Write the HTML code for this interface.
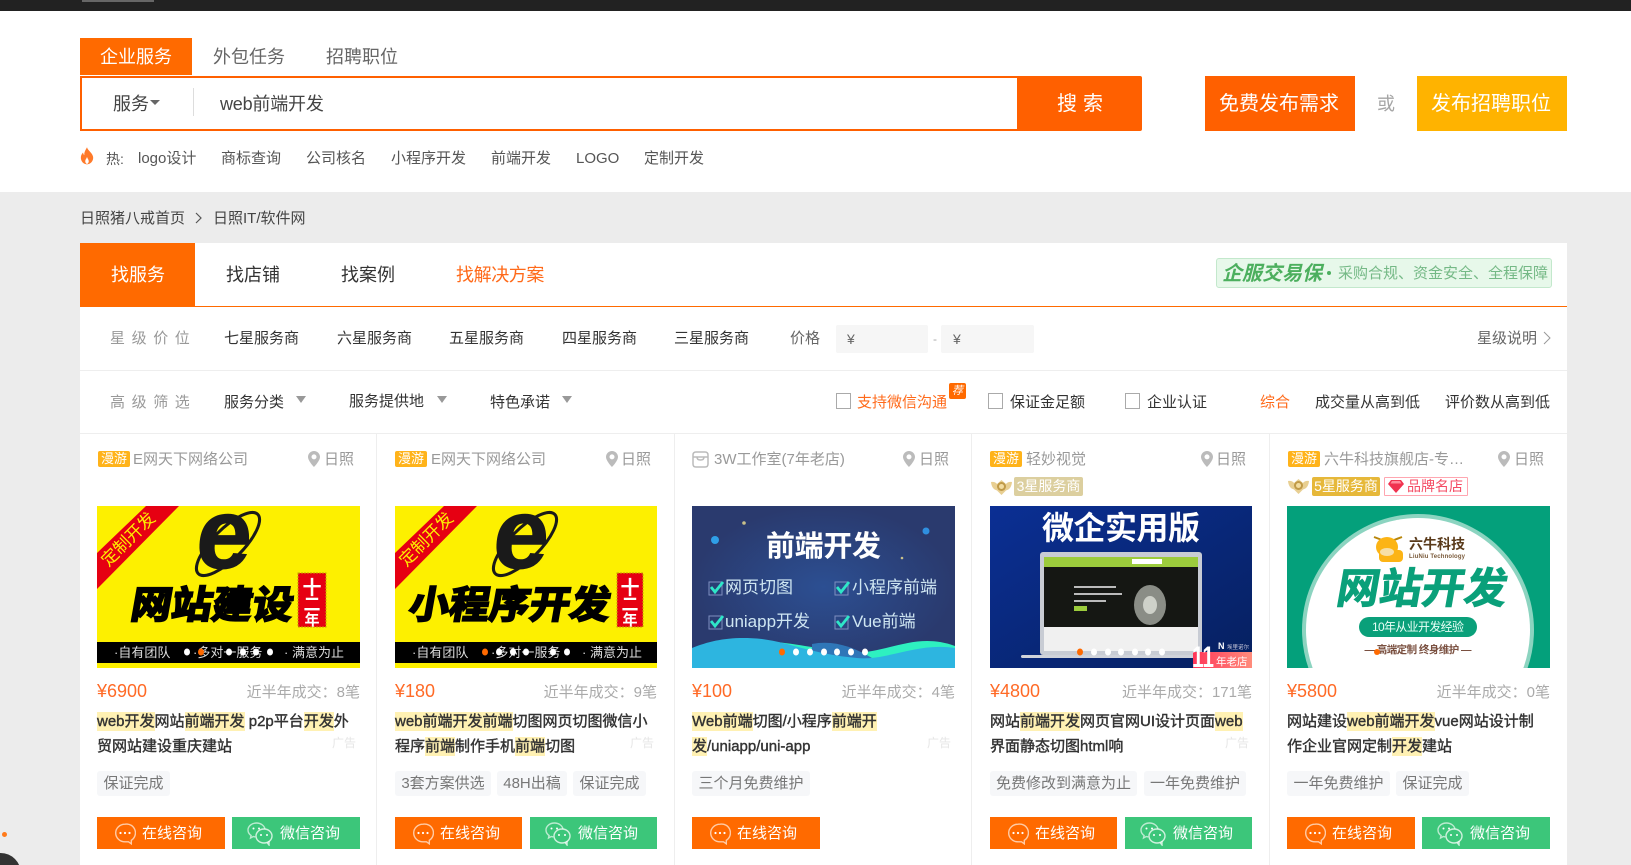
<!DOCTYPE html>
<html lang="zh"><head><meta charset="utf-8"><title>web前端开发</title>
<style>
html,body{margin:0;padding:0;width:1631px;height:865px;overflow:hidden;background:#ececec}
body{position:relative;font-family:"Liberation Sans","Noto Sans CJK SC",sans-serif;color:#333}
.r{position:absolute}
.t{position:absolute;white-space:nowrap;line-height:20px;height:20px;font-size:15px;margin-top:1px}
.g{color:#999}
.tag{position:absolute;width:32px;height:16px;top:451px;background:#ffb31a;border-radius:2px;color:#fff;font-size:13px;line-height:16px;text-align:center;white-space:nowrap}
.pin{position:absolute;top:451px;width:12px;height:16px}
.nm{top:449px;color:#999}
.pr{top:680px;font-size:18px;color:#ff6a26}
.sl{top:682px;color:#aaa;text-align:right}
.ti{position:absolute;top:709px;width:270px;font-size:15px;line-height:25px;color:#333;-webkit-text-stroke:.4px #333;white-space:nowrap}
.ti i{font-style:normal;background:#fff1b3;padding:1px 0}
.ad{position:absolute;top:736px;font-size:12px;line-height:14px;color:#e6e6e6;white-space:nowrap}
.st{position:absolute;top:771px;height:25px;line-height:26px;background:#f6f7f9;border-radius:3px;color:#777;font-size:15px;text-align:center;white-space:nowrap}
.bt{position:absolute;top:817px;height:32px;width:128px;line-height:33px;color:#fff;font-size:15px;white-space:nowrap}
.o{background:#ff6a00}.w{background:#3cc67a}
.bt span{position:absolute;left:45px;top:0}.w span{left:48px}
.bt svg{position:absolute;left:17px;top:6px}.w svg{left:15px;top:5px}
.cb{position:absolute;top:393px;width:13px;height:14px;border:1px solid #aaa;background:#fff}
.car{position:absolute;top:396px;width:0;height:0;border:5px solid transparent;border-top:7px solid #999;border-bottom:0}
.sep{position:absolute;top:434px;width:1px;height:431px;background:#eee}
.img{position:absolute;top:506px;height:162px;display:block;font-family:"Liberation Sans","Noto Sans CJK SC",sans-serif}
</style></head><body>
<svg width="0" height="0" style="position:absolute"><defs>
<symbol id="pin" viewBox="0 0 12 16"><path fill-rule="evenodd" fill="#bbb" d="M6 0C2.7 0 0 2.6 0 5.9 0 10 6 16 6 16s6-6 6-10.100C12 2.600 9.300 0 6 0zm0 3.400a2.500 2.500 0 1 1 0 5 2.500 2.500 0 0 1 0-5z"/></symbol>
<symbol id="chat" viewBox="0 0 22 22"><path fill="none" stroke="#fff" stroke-opacity=".65" stroke-width="1.400" d="M11 1.200a9.300 8.800 0 1 0 0 17.600h3.500l2.800 2v-3.500A8.800 8.800 0 0 0 11 1.200z"/><circle cx="6.500" cy="10" r="1.100" fill="#fff"/><circle cx="11" cy="10" r="1.100" fill="#fff"/><circle cx="15.500" cy="10" r="1.100" fill="#fff"/></symbol>
<symbol id="wx" viewBox="0 0 26 24"><path fill="none" stroke="#fff" stroke-opacity=".65" stroke-width="1.400" d="M9.500 1C4.800 1 1 4.100 1 8c0 2.200 1.200 4.200 3.100 5.500L3.500 16l2.800-1.500c.6.200 1.300.3 2 .4"/><path fill="none" stroke="#fff" stroke-opacity=".65" stroke-width="1.400" d="M9.500 1c4.200 0 7.700 2.500 8.400 5.800"/><ellipse cx="17" cy="14" rx="8" ry="7" fill="none" stroke="#fff" stroke-opacity=".75" stroke-width="1.400"/><path fill="none" stroke="#fff" stroke-opacity=".75" stroke-width="1.400" d="M20 20.500l2 2.500v-4"/><circle cx="6.500" cy="6.500" r="1" fill="#fff"/><circle cx="12" cy="6.500" r="1" fill="#fff"/><circle cx="14" cy="13" r="1" fill="#fff"/><circle cx="20" cy="13" r="1" fill="#fff"/></symbol>
<symbol id="medal" viewBox="0 0 21 17"><path fill="#e8cf92" d="M0 4c3-.5 5 .5 6 2l4.500-4L15 6c1-1.500 3-2.500 6-2-.5 5-2.500 7.500-6 8.500l-4.500 4.500L6 12.500C2.500 11.500.5 9 0 4z"/><circle cx="10.500" cy="8.500" r="4.500" fill="#c09a48"/><circle cx="10.500" cy="8.500" r="2.500" fill="#f2dca0"/></symbol>
</defs></svg>

<!-- top bar -->
<div class="r" style="left:0;top:0;width:1631px;height:11px;background:#222"></div>
<div class="r" style="left:82px;top:0;width:72px;height:2px;background:#666"></div>
<!-- white header -->
<div class="r" style="left:0;top:11px;width:1631px;height:181px;background:#fff"></div>
<div class="r" style="left:80px;top:38px;width:112px;height:37px;background:#ff6a00"></div>
<div class="t" style="left:100px;top:46px;font-size:18px;color:#fff">企业服务</div>
<div class="t" style="left:213px;top:46px;font-size:18px;color:#666">外包任务</div>
<div class="t" style="left:326px;top:46px;font-size:18px;color:#666">招聘职位</div>
<div class="r" style="left:80px;top:76px;width:938px;height:51px;border:2px solid #ff6000;background:#fff"></div>
<div class="t" style="left:113px;top:93px;font-size:18px;color:#444">服务</div>
<div class="r" style="left:150px;top:100px;width:0;height:0;border:5px solid transparent;border-top:5px solid #666;border-bottom:0"></div>
<div class="r" style="left:193px;top:88px;width:1px;height:28px;background:#ddd"></div>
<div class="t" style="left:220px;top:93px;font-size:18px;color:#444;letter-spacing:-.2px">web前端开发</div>
<div class="r" style="left:1017px;top:76px;width:125px;height:55px;background:#ff6000;border-radius:2px"></div>
<div class="t" style="left:1057px;top:93px;font-size:20px;color:#fff;letter-spacing:6px">搜索</div>
<div class="r" style="left:1205px;top:76px;width:150px;height:55px;background:#ff6000"></div>
<div class="t" style="left:1219px;top:93px;font-size:20px;color:#fff">免费发布需求</div>
<div class="t" style="left:1377px;top:93px;font-size:18px;color:#a5a5a5">或</div>
<div class="r" style="left:1417px;top:76px;width:150px;height:55px;background:#ffb300"></div>
<div class="t" style="left:1431px;top:93px;font-size:20px;color:#fff">发布招聘职位</div>
<svg class="r" style="left:80px;top:146px" width="14" height="20" viewBox="0 0 16 20"><path fill="#ff7a2a" d="M8 0c1 4 6 6 7 11 .6 4.500-3 8.500-7 8.500S.6 16 1 11c.3-2.500 1.600-4 2.500-5 .2 1.500.6 2.500 1.500 3C4.500 5.500 6.500 3 8 0z"/><path fill="#fff" d="M8 11c.5 2 2 3 2 5 0 1.500-1 3-2 3s-2-1.500-2-3c0-2 1.500-3 2-5z"/></svg>
<div class="t" style="left:106px;top:148px;font-size:14px;color:#555">热:</div>
<div class="t" style="left:138px;top:148px;color:#555">logo设计</div>
<div class="t" style="left:221px;top:148px;color:#555">商标查询</div>
<div class="t" style="left:306px;top:148px;color:#555">公司核名</div>
<div class="t" style="left:391px;top:148px;color:#555">小程序开发</div>
<div class="t" style="left:491px;top:148px;color:#555">前端开发</div>
<div class="t" style="left:576px;top:148px;color:#555">LOGO</div>
<div class="t" style="left:644px;top:148px;color:#555">定制开发</div>
<!-- breadcrumb -->
<div class="t" style="left:80px;top:208px;color:#444">日照猪八戒首页</div>
<svg class="r" style="left:194px;top:212px" width="8" height="12"><path d="M2 1l5 5-5 5" fill="none" stroke="#555" stroke-width="1.200"/></svg>
<div class="t" style="left:213px;top:208px;color:#444">日照IT/软件网</div>
<!-- panel -->
<div class="r" style="left:80px;top:243px;width:1487px;height:622px;background:#fff"></div>
<div class="r" style="left:80px;top:243px;width:115px;height:63px;background:#ff6a00"></div>
<div class="r" style="left:80px;top:306px;width:1487px;height:1px;background:#ff6a00"></div>
<div class="t" style="left:111px;top:264px;font-size:18px;color:#fff">找服务</div>
<div class="t" style="left:226px;top:264px;font-size:18px;color:#333">找店铺</div>
<div class="t" style="left:341px;top:264px;font-size:18px;color:#333">找案例</div>
<div class="t" style="left:456px;top:264px;font-size:18px;color:#ff6a1a;letter-spacing:-.4px">找解决方案</div>
<div class="r" style="left:1216px;top:258px;width:334px;height:28px;background:#e7f8ea;border:1px solid #c3e8cc;border-radius:3px"></div>
<div class="t" style="left:1222px;top:263px;font-size:20px;font-weight:bold;font-style:italic;color:#4caf5e">企服交易保</div>
<div class="r" style="left:1327px;top:271px;width:4px;height:4px;border-radius:50%;background:#4caf5e"></div>
<div class="t" style="left:1338px;top:263px;font-size:15px;color:#75b986">采购合规、资金安全、全程保障</div>
<!-- row 1 -->
<div class="t g" style="left:110px;top:328px;letter-spacing:6.600px">星级价位</div>
<div class="t" style="left:224px;top:328px">七星服务商</div>
<div class="t" style="left:337px;top:328px">六星服务商</div>
<div class="t" style="left:449px;top:328px">五星服务商</div>
<div class="t" style="left:562px;top:328px">四星服务商</div>
<div class="t" style="left:674px;top:328px">三星服务商</div>
<div class="t" style="left:790px;top:328px;color:#666">价格</div>
<div class="r" style="left:836px;top:325px;width:92px;height:28px;background:#f6f6f6;border-radius:2px"></div>
<div class="t" style="left:847px;top:328px;font-size:14px;color:#666">¥</div>
<div class="t" style="left:933px;top:328px;font-size:12px;color:#aaa">-</div>
<div class="r" style="left:941px;top:325px;width:93px;height:28px;background:#f6f6f6;border-radius:2px"></div>
<div class="t" style="left:953px;top:328px;font-size:14px;color:#666">¥</div>
<div class="t" style="left:1477px;top:328px;color:#666">星级说明</div>
<svg class="r" style="left:1542px;top:331px" width="10" height="14"><path d="M2 1l6 6-6 6" fill="none" stroke="#999" stroke-width="1"/></svg>
<div class="r" style="left:80px;top:370px;width:1487px;height:1px;background:#eee"></div>
<!-- row 2 -->
<div class="t g" style="left:110px;top:392px;letter-spacing:6.600px">高级筛选</div>
<div class="t" style="left:224px;top:392px">服务分类</div><div class="car" style="left:296px"></div>
<div class="t" style="left:349px;top:391px">服务提供地</div><div class="car" style="left:437px"></div>
<div class="t" style="left:490px;top:392px">特色承诺</div><div class="car" style="left:562px"></div>
<div class="cb" style="left:836px"></div>
<div class="t" style="left:857px;top:392px;color:#ff6a1a">支持微信沟通</div>
<div class="r" style="left:949px;top:383px;width:17px;height:16px;background:#ff6a00;border-radius:2px;color:#fff;font-size:11px;line-height:16px;text-align:center;font-style:italic">荐</div>
<div class="cb" style="left:988px"></div>
<div class="t" style="left:1010px;top:392px">保证金足额</div>
<div class="cb" style="left:1125px"></div>
<div class="t" style="left:1147px;top:392px">企业认证</div>
<div class="t" style="left:1260px;top:392px;color:#ff6a1a">综合</div>
<div class="t" style="left:1315px;top:392px">成交量从高到低</div>
<div class="t" style="left:1445px;top:392px">评价数从高到低</div>
<div class="r" style="left:80px;top:433px;width:1487px;height:1px;background:#eee"></div>
<div class="sep" style="left:376px"></div><div class="sep" style="left:674px"></div><div class="sep" style="left:971px"></div><div class="sep" style="left:1269px"></div>

<!-- card heads -->
<div class="tag" style="left:98px">漫游</div><div class="t nm" style="left:133px">E网天下网络公司</div>
<svg class="pin" style="left:308px"><use href="#pin"/></svg><div class="t nm" style="left:324px">日照</div>
<div class="tag" style="left:395px">漫游</div><div class="t nm" style="left:431px">E网天下网络公司</div>
<svg class="pin" style="left:606px"><use href="#pin"/></svg><div class="t nm" style="left:621px">日照</div>
<svg class="r" style="left:692px;top:451px" width="17" height="17" viewBox="0 0 17 17"><path fill="none" stroke="#bbb" stroke-width="1.500" d="M1 6V4q0-3 3-3h9q3 0 3 3v2M1 6h15M1 6v7q0 3 3 3h9q3 0 3-3V6M5 6q0 3 3.500 3T12 6"/></svg>
<div class="t nm" style="left:714px">3W工作室(7年老店)</div>
<svg class="pin" style="left:903px"><use href="#pin"/></svg><div class="t nm" style="left:919px">日照</div>
<div class="tag" style="left:990px">漫游</div><div class="t nm" style="left:1026px">轻妙视觉</div>
<svg class="pin" style="left:1201px"><use href="#pin"/></svg><div class="t nm" style="left:1216px">日照</div>
<div class="tag" style="left:1288px">漫游</div><div class="t nm" style="left:1324px;width:140px;overflow:hidden">六牛科技旗舰店-专…</div>
<svg class="pin" style="left:1498px"><use href="#pin"/></svg><div class="t nm" style="left:1514px">日照</div>
<svg class="r" style="left:991px;top:478px" width="21" height="17"><use href="#medal"/></svg>
<div class="r" style="left:1014px;top:477px;width:69px;height:19px;line-height:19px;background:#dccf9f;border-radius:2px;color:#fff;font-size:14px;text-align:center;white-space:nowrap">3星服务商</div>
<svg class="r" style="left:1288px;top:477px" width="21" height="17"><use href="#medal"/></svg>
<div class="r" style="left:1312px;top:477px;width:68px;height:19px;line-height:19px;background:#e6b83a;border-radius:2px;color:#fff;font-size:14px;text-align:center;white-space:nowrap">5星服务商</div>
<div class="r" style="left:1384px;top:477px;width:82px;height:17px;border:1px solid #ffa6b0;border-radius:1px"></div>
<svg class="r" style="left:1388px;top:479px" width="16" height="14"><path fill="#f0324f" d="M3 1h10l3 4-8 9-8-9z"/><path fill="#ff8a9a" d="M4 2h8l1.500 2.500h-11z"/></svg>
<div class="t" style="left:1407px;top:475px;font-size:14px;color:#f44b63">品牌名店</div>

<!-- image 1 -->
<svg class="img" style="left:97px" width="263" height="162" viewBox="0 0 263 162">
<rect width="263" height="162" fill="#fdf000"/>
<polygon points="49,0 82,0 0,83 0,47" fill="#e60012"/>
<text transform="translate(31,33) rotate(-45)" text-anchor="middle" font-size="17" fill="#fdf000" y="6">定制开发</text>
<ellipse cx="131" cy="38" rx="42" ry="15" transform="rotate(-45 131 38)" fill="none" stroke="#1a1a1a" stroke-width="3"/>
<text x="97" y="62" font-size="100" font-weight="bold" fill="#1a1a1a" stroke="#1a1a1a" stroke-width="1" font-family="Liberation Sans" transform="skewX(-6) translate(6,0)">e</text>
<text x="33" y="112" font-size="38" font-weight="bold" textLength="162" lengthAdjust="spacingAndGlyphs" fill="#000" stroke="#000" stroke-width="2" transform="skewX(-10) translate(19,0)">网站建设</text>
<rect x="201" y="67" width="28" height="54" fill="#e60012" stroke="#c9a500" stroke-width="1" stroke-dasharray="2 1"/>
<text x="215" y="88" font-size="19" font-weight="bold" fill="#fff" text-anchor="middle">十</text>
<text x="215" y="104" font-size="17" font-weight="bold" fill="#fff" text-anchor="middle">二</text>
<text x="215" y="119" font-size="15" font-weight="bold" fill="#fff" text-anchor="middle">年</text>
<rect y="136" width="263" height="21" fill="#000"/>
<g font-size="13" fill="#ddd"><text x="17" y="151">·自有团队</text><text x="96" y="151">·多对一服务</text><text x="187" y="151">· 满意为止</text></g>
<g fill="#fff"><ellipse cx="90" cy="146" rx="3" ry="3.500"/><ellipse cx="132" cy="146" rx="3" ry="3.500"/><ellipse cx="146" cy="146" rx="3" ry="3.500"/><ellipse cx="159" cy="146" rx="3" ry="3.500"/><ellipse cx="173" cy="146" rx="3" ry="3.500"/></g>
<ellipse cx="104" cy="146" rx="3" ry="3.500" fill="#ff6a00"/>
</svg>
<!-- image 2 -->
<svg class="img" style="left:395px" width="262" height="162" viewBox="0 0 262 162">
<rect width="262" height="162" fill="#fdf000"/>
<polygon points="49,0 82,0 0,83 0,47" fill="#e60012"/>
<text transform="translate(31,33) rotate(-45)" text-anchor="middle" font-size="17" fill="#fdf000" y="6">定制开发</text>
<ellipse cx="130" cy="38" rx="42" ry="15" transform="rotate(-45 130 38)" fill="none" stroke="#1a1a1a" stroke-width="3"/>
<text x="96" y="62" font-size="100" font-weight="bold" fill="#1a1a1a" stroke="#1a1a1a" stroke-width="1" font-family="Liberation Sans" transform="skewX(-6) translate(6,0)">e</text>
<text x="13" y="112" font-size="38" font-weight="bold" textLength="201" lengthAdjust="spacingAndGlyphs" fill="#000" stroke="#000" stroke-width="2" transform="skewX(-10) translate(19,0)">小程序开发</text>
<rect x="222" y="67" width="26" height="54" fill="#e60012" stroke="#c9a500" stroke-width="1" stroke-dasharray="2 1"/>
<text x="235" y="88" font-size="19" font-weight="bold" fill="#fff" text-anchor="middle">十</text>
<text x="235" y="104" font-size="17" font-weight="bold" fill="#fff" text-anchor="middle">二</text>
<text x="235" y="119" font-size="15" font-weight="bold" fill="#fff" text-anchor="middle">年</text>
<rect y="136" width="262" height="21" fill="#000"/>
<g font-size="13" fill="#ddd"><text x="17" y="151">·自有团队</text><text x="96" y="151">·多对一服务</text><text x="187" y="151">· 满意为止</text></g>
<g fill="#fff"><ellipse cx="104" cy="146" rx="3" ry="3.500"/><ellipse cx="118" cy="146" rx="3" ry="3.500"/><ellipse cx="131" cy="146" rx="3" ry="3.500"/><ellipse cx="158" cy="146" rx="3" ry="3.500"/><ellipse cx="172" cy="146" rx="3" ry="3.500"/></g>
<ellipse cx="90" cy="146" rx="3" ry="3.500" fill="#ff6a00"/>
</svg>
<!-- image 3 -->
<svg class="img" style="left:692px" width="263" height="162" viewBox="0 0 263 162">
<defs><radialGradient id="g3" cx=".5" cy=".5" r=".5"><stop offset="0" stop-color="#2c4f92"/><stop offset="1" stop-color="#2a3a6e"/></radialGradient></defs>
<rect width="263" height="162" fill="#2a3a6e"/><rect width="263" height="162" fill="url(#g3)"/>
<circle cx="23" cy="34" r="4" fill="#2f9fe8"/><circle cx="52" cy="17" r="1.800" fill="#c8c08a"/><circle cx="210" cy="52" r="1.300" fill="#c8c08a"/><circle cx="234" cy="25" r="3.500" fill="#2f8fe0"/>
<text x="74" y="50" font-size="29" font-weight="bold" fill="#fff" textLength="115">前端开发</text>
<g font-size="17" fill="#cfe6f2"><text x="33" y="87">网页切图</text><text x="160" y="87">小程序前端</text><text x="33" y="121">uniapp开发</text><text x="160" y="121">Vue前端</text></g>
<g fill="none" stroke="#7f8fc0"><rect x="17" y="76" width="13" height="13"/><rect x="143" y="76" width="13" height="13"/><rect x="17" y="110" width="13" height="13"/><rect x="143" y="110" width="13" height="13"/></g>
<g fill="none" stroke="#2fe6c8" stroke-width="2.800"><path d="M19 81l4 5 8-10"/><path d="M145 81l4 5 8-10"/><path d="M19 115l4 5 8-10"/><path d="M145 115l4 5 8-10"/></g>
<path fill="#2ef0c0" d="M40 138c30-8 70 2 110 8s70-22 113-6v22H40z"/>
<path fill="#2f76b8" d="M120 138c20-4 40 2 60 14v4h-60z"/>
<path fill="#2db5e0" d="M0 142c20-8 40-12 70-9 30 4 50 15 95 19 30 3 60-16 98-10v20H0z"/>
<g fill="#fff"><ellipse cx="104" cy="146" rx="3" ry="3.500"/><ellipse cx="118" cy="146" rx="3" ry="3.500"/><ellipse cx="132" cy="146" rx="3" ry="3.500"/><ellipse cx="145" cy="146" rx="3" ry="3.500"/><ellipse cx="159" cy="146" rx="3" ry="3.500"/><ellipse cx="173" cy="146" rx="3" ry="3.500"/></g>
<ellipse cx="90" cy="146" rx="3" ry="3.500" fill="#ff6a00"/>
</svg>
<!-- image 4 -->
<svg class="img" style="left:990px" width="262" height="162" viewBox="0 0 262 162">
<defs><linearGradient id="g4" x1="0" y1="0" x2="1" y2="1"><stop offset="0" stop-color="#0b2f94"/><stop offset="1" stop-color="#06205f"/></linearGradient></defs>
<rect width="262" height="162" fill="url(#g4)"/>
<text x="52" y="33" font-size="32" font-weight="bold" fill="#fff" textLength="158">微企实用版</text>
<rect x="50" y="46" width="162" height="103" rx="3" fill="#c8ccd4"/>
<rect x="54" y="51" width="154" height="10" fill="#9ccc3c"/>
<rect x="54" y="61" width="154" height="60" fill="#151713"/>
<rect x="54" y="121" width="154" height="24" fill="#f0f0f0"/>
<rect x="142" y="53" width="30" height="5" fill="#fff"/>
<ellipse cx="160" cy="99" rx="16" ry="20" fill="#8a8d86"/><ellipse cx="160" cy="99" rx="7" ry="9" fill="#ced1c9"/>
<g fill="#bbb"><rect x="84" y="80" width="42" height="2"/><rect x="84" y="87" width="48" height="2"/><rect x="84" y="94" width="32" height="2"/></g><rect x="84" y="100" width="13" height="5" fill="#9ccc3c"/>
<rect x="31" y="149" width="197" height="3" rx="1.500" fill="#d0d3da"/>
<defs><linearGradient id="g4b"><stop offset="0" stop-color="#ff3557"/><stop offset="1" stop-color="#ff8c7c"/></linearGradient></defs>
<rect x="203" y="146" width="59" height="16" fill="url(#g4b)"/>
<text x="202" y="161" font-size="30" font-weight="bold" fill="#fff" textLength="22" lengthAdjust="spacingAndGlyphs">11</text>
<text x="226" y="159" font-size="10.500" fill="#fff">年老店</text>
<text x="228" y="143" font-size="9" font-weight="bold" fill="#fff">N</text><text x="237" y="143" font-size="5.500" fill="#ccd">埃里诺尔</text>
<g fill="#fff"><ellipse cx="104" cy="146" rx="3" ry="3.500"/><ellipse cx="118" cy="146" rx="3" ry="3.500"/><ellipse cx="131" cy="146" rx="3" ry="3.500"/><ellipse cx="145" cy="146" rx="3" ry="3.500"/><ellipse cx="158" cy="146" rx="3" ry="3.500"/><ellipse cx="172" cy="146" rx="3" ry="3.500"/></g>
<ellipse cx="90" cy="146" rx="3" ry="3.500" fill="#ff6a00"/>
</svg>
<!-- image 5 -->
<svg class="img" style="left:1287px" width="263" height="162" viewBox="0 0 263 162">
<rect width="263" height="162" fill="#04a07b"/>
<circle cx="131" cy="124" r="116" fill="#8cd4c0"/><circle cx="131" cy="124" r="112" fill="#fff"/>
<path d="M87 31l8 3M115 31l-8 3" stroke="#b8860b" stroke-width="2"/>
<ellipse cx="100" cy="41" rx="11" ry="10" fill="#fcb415"/><rect x="92" y="44" width="24" height="12" rx="4" fill="#fcb415"/><ellipse cx="100" cy="46" rx="7" ry="4" fill="#f7dfa5"/>
<text x="122" y="43" font-size="14" font-weight="bold" fill="#5a3a1a">六牛科技</text>
<text x="122" y="52" font-size="6" font-weight="bold" fill="#7a5a3a" textLength="56">LiuNiu Technology</text>
<text x="48" y="97" font-size="42" font-weight="bold" fill="#0aa07a" stroke="#0aa07a" stroke-width="1" textLength="170" lengthAdjust="spacingAndGlyphs" transform="skewX(-10) translate(17,0)">网站开发</text>
<rect x="72" y="111" width="118" height="20" rx="10" fill="#0aa07a"/>
<text x="131" y="125" font-size="12" fill="#e8fff6" text-anchor="middle" textLength="92">10年从业开发经验</text>
<text x="131" y="147" font-size="10.500" font-weight="bold" fill="#7a5040" text-anchor="middle" textLength="107">— 高端定制 终身维护 —</text>
<circle cx="90" cy="146" r="3" fill="#ff6a00"/>
</svg>

<!-- prices -->
<div class="t pr" style="left:97px">¥6900</div><div class="t sl" style="left:230px;width:130px">近半年成交：8笔</div>
<div class="t pr" style="left:395px">¥180</div><div class="t sl" style="left:527px;width:130px">近半年成交：9笔</div>
<div class="t pr" style="left:692px">¥100</div><div class="t sl" style="left:825px;width:130px">近半年成交：4笔</div>
<div class="t pr" style="left:990px">¥4800</div><div class="t sl" style="left:1102px;width:150px">近半年成交：171笔</div>
<div class="t pr" style="left:1287px">¥5800</div><div class="t sl" style="left:1420px;width:130px">近半年成交：0笔</div>
<!-- titles -->
<div class="ti" style="left:97px"><i>web开发</i>网站<i>前端开发</i> p2p平台<i>开发</i>外<br>贸网站建设重庆建站</div>
<div class="ti" style="left:395px"><i>web前端开发前端</i>切图网页切图微信小<br>程序<i>前端</i>制作手机<i>前端</i>切图</div>
<div class="ti" style="left:692px"><i>Web前端</i>切图/小程序<i>前端开</i><br><i>发</i>/uniapp/uni-app</div>
<div class="ti" style="left:990px">网站<i>前端开发</i>网页官网UI设计页面<i>web</i><br>界面静态切图html响</div>
<div class="ti" style="left:1287px">网站建设<i>web前端开发</i>vue网站设计制<br>作企业官网定制<i>开发</i>建站</div>
<div class="ad" style="left:332px">广告</div><div class="ad" style="left:630px">广告</div><div class="ad" style="left:927px">广告</div><div class="ad" style="left:1225px">广告</div>
<!-- service tags -->
<div class="st" style="left:97px;width:73px">保证完成</div>
<div class="st" style="left:395px;width:96px">3套方案供选</div><div class="st" style="left:497px;width:70px">48H出稿</div><div class="st" style="left:573px;width:73px">保证完成</div>
<div class="st" style="left:692px;width:118px">三个月免费维护</div>
<div class="st" style="left:990px;width:147px">免费修改到满意为止</div><div class="st" style="left:1144px;width:102px">一年免费维护</div>
<div class="st" style="left:1287px;width:103px">一年免费维护</div><div class="st" style="left:1396px;width:73px">保证完成</div>
<!-- buttons -->
<div class="bt o" style="left:97px"><svg width="22" height="22"><use href="#chat"/></svg><span>在线咨询</span></div>
<div class="bt w" style="left:232px"><svg width="26" height="24"><use href="#wx"/></svg><span>微信咨询</span></div>
<div class="bt o" style="left:395px;width:127px"><svg width="22" height="22"><use href="#chat"/></svg><span>在线咨询</span></div>
<div class="bt w" style="left:530px;width:127px"><svg width="26" height="24"><use href="#wx"/></svg><span>微信咨询</span></div>
<div class="bt o" style="left:692px"><svg width="22" height="22"><use href="#chat"/></svg><span>在线咨询</span></div>
<div class="bt o" style="left:990px;width:127px"><svg width="22" height="22"><use href="#chat"/></svg><span>在线咨询</span></div>
<div class="bt w" style="left:1125px;width:127px"><svg width="26" height="24"><use href="#wx"/></svg><span>微信咨询</span></div>
<div class="bt o" style="left:1287px"><svg width="22" height="22"><use href="#chat"/></svg><span>在线咨询</span></div>
<div class="bt w" style="left:1422px"><svg width="26" height="24"><use href="#wx"/></svg><span>微信咨询</span></div>
<!-- floating -->
<div class="r" style="left:2px;top:832px;width:5px;height:5px;border-radius:50%;background:#ff7a1a"></div>
<div class="r" style="left:-20px;top:853px;width:41px;height:41px;border-radius:50%;background:#333"></div>
</body></html>
